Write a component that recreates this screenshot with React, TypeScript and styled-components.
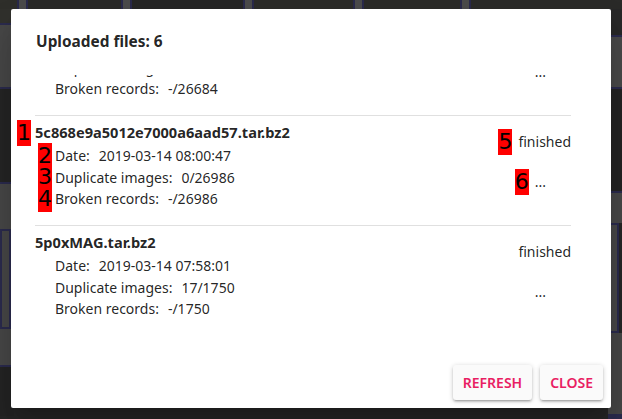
import React, { useLayoutEffect, useRef } from "react";
import styled, { createGlobalStyle } from "styled-components";

const Global = createGlobalStyle`
  html, body { margin: 0; padding: 0; }
  body {
    width: 622px; height: 419px; overflow: hidden;
    background: #262626;
    font-family: "Noto Sans", "Open Sans", sans-serif;
  }
`;

/* ---------- backdrop (the gallery behind the dimmed overlay) ---------- */
const Backdrop = styled.div`
  position: fixed; inset: 0;
  display: flex; flex-direction: column;
  background: #252525;
`;
const Strip = styled.div<{ $h: number }>`
  height: ${(p) => p.$h}px;
  display: flex;
  flex: none;
`;
const Photo = styled.div<{ $w?: number; $tone?: string }>`
  ${(p) => (p.$w ? `width: ${p.$w}px; flex: none;` : "flex: 1;")}
  background: ${(p) => p.$tone || "#272725"};
`;
const Gap = styled.div`
  width: 7px; flex: none;
  background: #4a4a4a;
  border-left: 2px solid #29294a;
  border-right: 2px solid #29294a;
`;
const Middle = styled.div`
  flex: 1;
  display: flex;
  justify-content: space-between;
`;
const SideCol = styled.div`
  width: 14px;
  display: flex; flex-direction: column;
`;
const Block = styled.div<{ $h: number; $bg: string; $edge?: boolean; $boxed?: boolean }>`
  height: ${(p) => p.$h}px; flex: none;
  background: ${(p) => p.$bg};
  ${(p) => (p.$edge ? "border-top: 2px solid #2a2a4c;" : "")}
  ${(p) => (p.$boxed ? "box-shadow: inset 0 0 0 2px #2a2a4c; margin-right: 3px;" : "")}
`;

/* ---------- dialog ---------- */
const Dialog = styled.div`
  position: fixed;
  left: 11px; top: 9px;
  width: 600px; height: 399px;
  background: #fff;
  border-radius: 2px;
  box-shadow: 0 11px 15px -7px rgba(0,0,0,.2), 0 24px 38px 3px rgba(0,0,0,.14);
  display: flex; flex-direction: column;
  color: rgba(0,0,0,0.87);
`;
const Title = styled.h2`
  margin: 0; flex: none;
  padding: 23px 24px 0 25px;
  height: 66px; box-sizing: border-box;
  font-size: 15.4px; line-height: 20px; font-weight: 700;
`;
const Content = styled.div`
  flex: 1; min-height: 0;
  overflow: hidden;
  padding: 0 40px 0 24px;
`;
const List = styled.div`
  padding-bottom: 40px;
`;
const Item = styled.div`
  height: 110px; box-sizing: border-box;
  border-top: 1px solid #e0e0e0;
  padding-top: 6px;
  display: flex; justify-content: space-between;
  font-size: 14px;
`;
const Left = styled.div`
  display: flex; flex-direction: column;
`;
const FileName = styled.div`
  font-weight: 700; font-size: 14.6px; line-height: 21px; margin-bottom: 2px;
  align-self: flex-start;
`;
const Detail = styled.div`
  padding-left: 20px; line-height: 21.5px;
  display: flex;
`;
const Value = styled.span`
  margin-left: 9px;
`;
const Right = styled.div`
  display: flex; flex-direction: column; align-items: flex-end;
  padding-top: 9px;
`;
const Status = styled.div`
  line-height: 21px; font-size: 14px;
`;
const More = styled.div`
  line-height: 21px; margin-top: 19px; margin-right: 25px;
`;
const Anchor = styled.span`
  position: relative; display: inline-block;
`;
const Badge = styled.span<{ $gap: number }>`
  position: absolute;
  right: calc(100% + ${(p) => p.$gap}px);
  top: 50%; transform: translateY(-50%);
  background: #ff0000; color: #000;
  font-family: "DejaVu Sans", sans-serif;
  font-size: 22px; line-height: 26px; font-weight: 400;
  width: 14px; text-align: center;
`;
const Actions = styled.div`
  height: 51px; flex: none;
  display: flex; justify-content: flex-end; align-items: center;
  gap: 8px; padding-right: 8px;
`;
const Button = styled.button`
  height: 35px; padding: 0 10px;
  border: none; border-radius: 3px;
  background: #fafafa;
  box-shadow: 0 1px 5px rgba(0,0,0,.2), 0 2px 2px rgba(0,0,0,.14), 0 3px 1px -2px rgba(0,0,0,.12);
  color: #e91e63;
  font-family: inherit; font-size: 14px; font-weight: 600;
  text-transform: uppercase;
`;

type F = { name: string; date: string; dup: string; broken: string; status: string };
const files: F[] = [
  { name: "5c868f0a5012e7000a6aad58.tar.bz2", date: "2019-03-14 08:02:11", dup: "0/26684", broken: "-/26684", status: "finished" },
  { name: "5c868e9a5012e7000a6aad57.tar.bz2", date: "2019-03-14 08:00:47", dup: "0/26986", broken: "-/26986", status: "finished" },
  { name: "5p0xMAG.tar.bz2", date: "2019-03-14 07:58:01", dup: "17/1750", broken: "-/1750", status: "finished" },
];

const Marked: React.FC<{ n?: number; gap?: number; children: React.ReactNode }> = ({ n, gap = 4, children }) =>
  n ? (
    <Anchor>
      <Badge $gap={gap}>{n}</Badge>
      {children}
    </Anchor>
  ) : (
    <>{children}</>
  );

export default function App() {
  const ref = useRef<HTMLDivElement>(null);
  useLayoutEffect(() => {
    if (ref.current) ref.current.scrollTop = 70;
  }, []);
  return (
    <>
      <Global />
      <Backdrop>
        <Strip $h={9}>
          <Photo $w={17} $tone="#2e2e2a" /><Gap />
          <Photo $tone="#292927" /><Gap />
          <Photo $w={111} $tone="#252525" /><Gap />
          <Photo $w={99} $tone="#2b2b28" /><Gap />
          <Photo $w={96} $tone="#2a2a27" /><Gap />
          <Photo $w={151} $tone="#2a2a28" />
        </Strip>
        <Middle>
          <SideCol>
            <Block $h={14} $bg="#30302c" />
            <Block $h={62} $bg="#464646" $edge />
            <Block $h={93} $bg="#242424" $edge />
            <Block $h={45} $bg="#464646" $edge />
            <Block $h={100} $bg="#464646" $boxed />
            <Block $h={36} $bg="#464646" />
            <Block $h={49} $bg="#232323" $edge />
          </SideCol>
          <SideCol>
            <Block $h={26} $bg="#272727" />
            <Block $h={50} $bg="#484848" $edge />
            <Block $h={102} $bg="#232323" $edge />
            <Block $h={30} $bg="#474747" $edge />
            <Block $h={110} $bg="#474747" $boxed />
            <Block $h={81} $bg="#454545" />
            <Block $h={10} $bg="#2a2a4c" />
          </SideCol>
        </Middle>
        <Strip $h={11}>
          <Photo $w={82} $tone="#262624" /><Gap />
          <Photo $w={75} $tone="#242422" /><Gap />
          <Photo $w={56} $tone="#252523" /><Gap />
          <Photo $w={55} $tone="#262624" /><Gap />
          <Photo $w={86} $tone="#242422" /><Gap />
          <Photo $w={89} $tone="#252523" /><Gap />
          <Photo $tone="#262624" />
        </Strip>
      </Backdrop>

      <Dialog>
        <Title>Uploaded files: 6</Title>
        <Content ref={ref}>
          <List>
            {files.map((f, i) => {
              const m = i === 1;
              return (
                <Item key={f.name}>
                  <Left>
                    <FileName>
                      <Marked n={m ? 1 : undefined}>{f.name}</Marked>
                    </FileName>
                    <Detail>
                      <Marked n={m ? 2 : undefined} gap={3}>
                        Date:<Value>{f.date}</Value>
                      </Marked>
                    </Detail>
                    <Detail>
                      <Marked n={m ? 3 : undefined} gap={3}>
                        Duplicate images:<Value>{f.dup}</Value>
                      </Marked>
                    </Detail>
                    <Detail>
                      <Marked n={m ? 4 : undefined} gap={3}>
                        Broken records:<Value>{f.broken}</Value>
                      </Marked>
                    </Detail>
                  </Left>
                  <Right>
                    <Status>
                      <Marked n={m ? 5 : undefined} gap={6}>{f.status}</Marked>
                    </Status>
                    <More>
                      <Marked n={m ? 6 : undefined} gap={6}>...</Marked>
                    </More>
                  </Right>
                </Item>
              );
            })}
          </List>
        </Content>
        <Actions>
          <Button>Refresh</Button>
          <Button>Close</Button>
        </Actions>
      </Dialog>
    </>
  );
}
